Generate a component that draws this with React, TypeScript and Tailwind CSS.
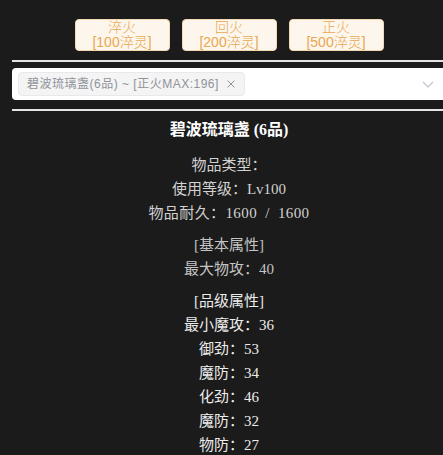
import React from "react";

const serif = { fontFamily: '"Liberation Serif", "Noto Sans CJK SC", serif' };
const sans = { fontFamily: '"Liberation Sans", "Noto Sans CJK SC", sans-serif' };

function FireButton({ name, cost }: { name: string; cost: string }) {
  return (
    <button
      className="w-[95px] h-[32px] flex flex-col items-center justify-center rounded-[4px] border border-[#f5dab1] bg-[#fdf6ec] text-[#e9a750] text-[14px] leading-[15px] font-light"
      style={sans}
    >
      <span>{name}</span>
      <span>{cost}</span>
    </button>
  );
}

function Line({ children, className = "" }: { children: React.ReactNode; className?: string }) {
  return <div className={"h-6 leading-6 whitespace-pre " + className}>{children}</div>;
}

export default function App() {
  return (
    <div className="w-[443px] h-[455px] overflow-hidden bg-[#1b1b1b]">
      <div className="ml-3 w-[434px] flex flex-col">
        <div className="pt-[19px] flex justify-center gap-3">
          <FireButton name="淬火" cost="[100淬灵]" />
          <FireButton name="回火" cost="[200淬灵]" />
          <FireButton name="正火" cost="[500淬灵]" />
        </div>
        <div className="mt-[9px] h-[2px] bg-[#e4e4e4]" />
        <div className="mt-[6px] h-[32px] bg-white rounded-l-[4px] flex items-center pl-[6px]">
          <div
            className="h-6 flex items-center gap-[7px] px-[8px] rounded-[4px] bg-[#f4f4f5] border border-[#e9e9eb] text-[#909399] text-[12px] tracking-[0.5px]"
            style={sans}
          >
            <span className="whitespace-pre">碧波琉璃盏(6品) ~ [正火MAX:196]</span>
            <svg width="10" height="10" viewBox="0 0 10 10" className="text-[#909399]">
              <path d="M1.5 1.5 L8.5 8.5 M8.5 1.5 L1.5 8.5" stroke="currentColor" strokeWidth="1" fill="none" />
            </svg>
          </div>
          <div className="flex-1" />
          <svg width="14" height="14" viewBox="0 0 14 14" className="mr-[11px]">
            <path d="M2 5 L7 10 L12 5" stroke="#c0c4cc" strokeWidth="1.2" fill="none" />
          </svg>
        </div>
        <div className="mt-[9px] h-[2px] bg-[#e4e4e4]" />
        <div className="pt-[7px] flex flex-col items-center text-[15px]" style={serif}>
          <Line className="text-white font-bold text-[16px]">碧波琉璃盏 (6品)</Line>
          <div className="mt-[11px] flex flex-col items-center text-[#d2d2d2]">
            <Line>物品类型：</Line>
            <Line>使用等级：Lv100</Line>
            <Line className="[word-spacing:4px] tracking-[0.4px]">物品耐久：1600 / 1600</Line>
          </div>
          <div className="mt-[8px] flex flex-col items-center text-[#c4c4c4]">
            <Line>[基本属性]</Line>
            <Line>最大物攻：40</Line>
          </div>
          <div className="mt-[8px] flex flex-col items-center text-[#ececec]">
            <Line>[品级属性]</Line>
            <Line>最小魔攻：36</Line>
            <Line>御劲：53</Line>
            <Line>魔防：34</Line>
            <Line>化劲：46</Line>
            <Line>魔防：32</Line>
            <Line>物防：27</Line>
          </div>
        </div>
      </div>
    </div>
  );
}
